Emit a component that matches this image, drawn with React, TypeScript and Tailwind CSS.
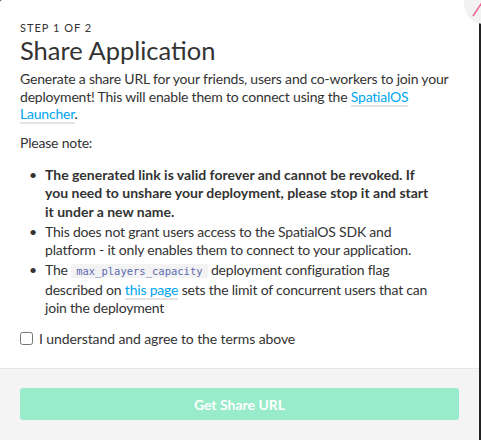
export default function App() {
  return (
    <div className="relative w-[481px] h-[440px] bg-[#222] overflow-hidden" style={{ fontFamily: 'Lato, "Open Sans", sans-serif' }}>
      <div className="w-[479px] h-[440px] bg-white rounded-[2px] flex flex-col text-[#333]">
        {/* Body */}
        <div className="px-5 pt-[21px] flex-1">
          <div className="text-[11px] leading-[13px] tracking-[1px] uppercase">Step 1 of 2</div>
          <h1 className="text-[25.5px] leading-[30px] font-normal mt-[1px]">Share Application</h1>
          <p className="text-[14px] leading-[17.5px] mt-[5px] tracking-[-0.2px]">
            Generate a share URL for your friends, users and co-workers to join your deployment! This will enable them to connect using the{' '}
            <a className="text-[#00a6f0] border-b-2 border-[#e4e4e4]">SpatialOS Launcher</a>.
          </p>
          <p className="text-[14px] leading-[18px] mt-[11px] tracking-[-0.2px]">Please note:</p>
          <ul className="mt-[14px] text-[14px] leading-[18.5px] flex flex-col gap-[1.5px] tracking-[-0.2px]">
            <Bullet>
              <span className="font-bold tracking-[0px]">
                The generated link is valid forever and cannot be revoked. If you need to unshare your deployment, please stop it and start it under a new name.
              </span>
            </Bullet>
            <Bullet>
              This does not grant users access to the SpatialOS SDK and platform - it only enables them to connect to your application.
            </Bullet>
            <Bullet>
              The{' '}
              <code className="bg-[#f3f3f3] text-[#5b6bb0] text-[10.5px] tracking-[0px] px-[5px] py-[1px] rounded-[2px]" style={{ fontFamily: '"DejaVu Sans Mono", monospace' }}>
                max_players_capacity
              </code>{' '}
              deployment configuration flag described on{' '}
              <a className="text-[#00a6f0] border-b-2 border-[#e4e4e4]">this page</a> sets the limit of concurrent users that can join the deployment
            </Bullet>
          </ul>
          <label className="flex items-center gap-[6px] mt-[12px] text-[14px] leading-[18px] tracking-[-0.1px]">
            <input type="checkbox" className="w-[13px] h-[13px] m-0" />
            <span>I understand and agree to the terms above</span>
          </label>
        </div>
        {/* Footer */}
        <div className="h-[72px] bg-[#f4f4f4] border-t border-[#e6e6e6] px-5 pt-[19px]">
          <button className="w-full h-[32px] rounded-[3px] bg-[#98ebcb] text-white font-bold text-[14px]">
            Get Share URL
          </button>
        </div>
      </div>
      {/* Close button */}
      <div className="absolute left-[464px] -top-[16px] w-[40px] h-[40px] rounded-full bg-[#f2f2f2]">
        <svg width="40" height="40" viewBox="0 0 40 40" className="block">
          <path d="M9 32 L19 17" stroke="#f06292" strokeWidth="1.5" />
        </svg>
      </div>
    </div>
  )
}

function Bullet({ children }: { children: React.ReactNode }) {
  return (
    <li className="flex">
      <span className="w-[25px] pl-[9px] shrink-0">•</span>
      <span className="pr-[22px]">{children}</span>
    </li>
  )
}
